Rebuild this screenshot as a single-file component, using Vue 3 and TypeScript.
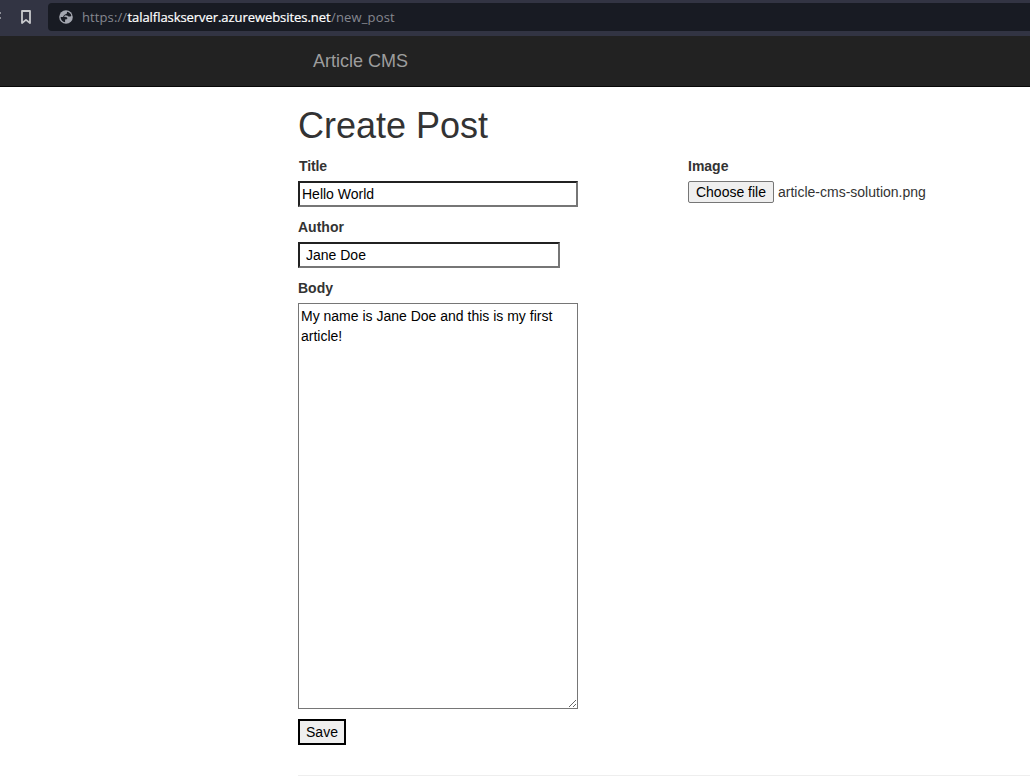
<script setup lang="ts">
import { ref } from 'vue'

const title = ref<string>('Hello World')
const author = ref<string>('Jane Doe')
const body = ref<string>('My name is Jane Doe and this is my first article!')
const fileName = ref<string>('article-cms-solution.png')
</script>

<template>
  <div class="window">
    <div class="browser-bar">
      <svg class="clipped" width="2" height="12" viewBox="0 0 2 12">
        <path d="M0 2h1M0 7h1" stroke="#8e9098" stroke-width="2" />
      </svg>
      <svg class="bookmark" width="12" height="16" viewBox="0 0 12 16">
        <path d="M2 2H10V14L6 10.9L2 14Z" fill="none" stroke="#c8c9cc" stroke-width="1.8" stroke-linejoin="round" />
      </svg>
      <div class="address">
        <svg class="globe" width="14" height="14" viewBox="0 0 14 14">
          <circle cx="7" cy="7" r="6.8" fill="#a4a7b0" />
          <path d="M8 1.7C10.3 2 12 3.7 12.3 5.8L11.4 6.6H9.5L8.7 5.7L7.2 5.4L6.8 4.3L7.9 3.5Z" fill="#181b23" />
          <path d="M1.6 7H5.8C7.2 7 8 7.7 8 8.8V9.2H7C6.4 9.2 6.1 9.7 6.1 10.3V12.3C3.5 12 1.6 9.8 1.6 7Z" fill="#181b23" />
          <path d="M7.3 4.5L5.3 5.4L4.4 7.4H6.5L8.3 8.2" fill="none" stroke="#181b23" stroke-width="1" />
        </svg>
        <span class="scheme">https://</span><span class="host">talalflaskserver.azurewebsites.net</span><span class="path">/new_post</span>
      </div>
    </div>

    <nav class="navbar"><a class="brand">Article CMS</a></nav>

    <main class="content">
      <h1>Create Post</h1>
      <form class="form" @submit.prevent>
        <div class="main-column">
          <label class="title-label" for="title">Title</label>
          <input id="title" v-model="title" class="field" type="text" spellcheck="false" />
          <label for="author">Author</label>
          <input id="author" v-model="author" class="field author" type="text" spellcheck="false" />
          <label for="body">Body</label>
          <textarea id="body" v-model="body" class="body-field" spellcheck="false"></textarea>
          <button class="save" type="submit">Save</button>
        </div>
        <div class="image-column">
          <label>Image</label>
          <div class="file-row">
            <button class="choose" type="button">Choose file</button>
            <span class="file-name">{{ fileName }}</span>
          </div>
        </div>
      </form>
      <hr />
    </main>
  </div>
</template>

<style>
body {
  margin: 0;
  background: #fff;
}
</style>

<style scoped>
.window,
.window * {
  box-sizing: border-box;
}
.window {
  height: 780px;
  overflow: hidden;
  background: #fff;
  color: #333;
  font: 14px/20px "Liberation Sans", Arial, sans-serif;
}
.browser-bar {
  display: flex;
  height: 36px;
  padding-top: 3px;
  background: #323443;
}
.clipped {
  margin-top: 8px;
}
.bookmark {
  margin: 6px 0 0 18px;
}
.address {
  display: flex;
  flex: 1;
  height: 28px;
  margin-left: 16px;
  padding-left: 11px;
  border-radius: 4px 0 0 4px;
  background: #181b23;
  font: 13px/28px "Open Sans", "Noto Sans", sans-serif;
  white-space: nowrap;
}
.globe {
  margin: 7px 9px 0 0;
}
.scheme {
  width: 45.5px;
  color: #858790;
  letter-spacing: 0.1px;
}
.host {
  width: 203.5px;
  color: #fff;
  letter-spacing: -0.06px;
  -webkit-text-stroke: 0.2px #fff;
}
.path {
  color: #858790;
  letter-spacing: 0.15px;
}
.navbar {
  height: 51px;
  padding: 15px 0 0 313px;
  border-bottom: 1px solid #080808;
  background: #222;
}
.brand {
  display: block;
  color: #9d9d9d;
  font-size: 18px;
  line-height: 20px;
}
.content {
  padding: 19px 0 0 298px;
}
h1 {
  height: 40px;
  margin: 0 0 10px;
  font-size: 36px;
  font-weight: 400;
  line-height: 40px;
}
.form {
  display: grid;
  grid-template-columns: 280px 1fr;
  column-gap: 110px;
}
.main-column {
  display: flex;
  flex-direction: column;
  align-items: flex-start;
}
label {
  display: block;
  height: 20px;
  margin-bottom: 5px;
  font-weight: 700;
}
.title-label {
  padding-left: 1px;
  letter-spacing: -0.15px;
}
input,
textarea,
button {
  margin: 0;
  color: #000;
  font: inherit;
  outline: none;
}
.field {
  width: 280px;
  height: 26px;
  margin-bottom: 10px;
  padding: 1px 2px;
  border: 2px solid;
  border-color: #212121 #767676 #767676 #212121;
  border-radius: 0;
  background: #fff;
}
.author {
  width: 262px;
  padding: 1px 6px;
}
.body-field {
  width: 280px;
  height: 406px;
  margin-bottom: 10px;
  padding: 2px;
  border: 1px solid #767676;
  border-radius: 0;
  background: #fff;
  resize: both;
}
.save {
  width: 48px;
  height: 26px;
  padding: 0;
  border: 2px solid #000;
  border-radius: 0;
  background: #efefef;
}
.file-row {
  display: flex;
  gap: 4px;
  height: 22px;
}
.choose {
  width: 86px;
  height: 22px;
  padding: 0;
  border: 1px solid #767676;
  border-radius: 2px;
  background: #efefef;
}
.file-name {
  line-height: 22px;
}
hr {
  height: 1px;
  margin: 30px 0 0;
  border: 0;
  background: #eee;
}
</style>
